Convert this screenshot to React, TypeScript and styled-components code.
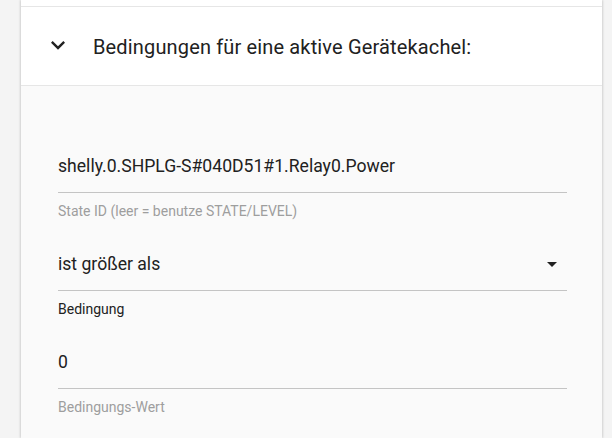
import React from "react";
import styled, { createGlobalStyle } from "styled-components";

const Global = createGlobalStyle`
  html, body { margin: 0; padding: 0; }
  body {
    background: #f4f4f4;
    font-family: Roboto, "Liberation Sans", sans-serif;
    width: 612px;
    height: 438px;
    overflow: hidden;
  }
`;

const Page = styled.div`
  display: flex;
  padding: 0 10px 0 21px;
  height: 438px;
  box-sizing: border-box;
`;

const Card = styled.div`
  flex: 1;
  display: flex;
  flex-direction: column;
  background: #fafafa;
  box-shadow: -1px 0 2px rgba(0,0,0,0.14), 1px 0 2px rgba(0,0,0,0.14);
`;

const PrevPanel = styled.div`
  height: 6px;
  background: #fff;
  border-bottom: 1px solid #e6e6e6;
`;

const Header = styled.div`
  height: 78px;
  background: #fff;
  border-bottom: 1px solid #e6e6e6;
  display: flex;
  align-items: center;
  padding-left: 23px;
`;

const Chevron = styled.svg`
  width: 28px;
  height: 28px;
  margin-right: 21px;
  margin-top: -2px;
`;

const Title = styled.div`
  font-size: 20px;
  letter-spacing: 0.15px;
  color: #212121;
  margin-top: 2px;
`;

const Content = styled.div`
  padding: 57px 35px 0 37px;
  display: flex;
  flex-direction: column;
`;

const Field = styled.div`
  display: flex;
  flex-direction: column;
  margin-bottom: 22px;
`;

const InputRow = styled.div`
  display: flex;
  align-items: center;
  justify-content: space-between;
  box-sizing: border-box;
  height: 50px;
  padding-bottom: 4px;
  border-bottom: 1px solid #c4c4c4;
  font-size: 17.6px;
  color: #212121;
`;

const Helper = styled.div<{ $dark?: boolean }>`
  margin-top: 10px;
  font-size: 14px;
  line-height: 16px;
  color: ${(p) => (p.$dark ? "#212121" : "#9e9e9e")};
`;

const Caret = styled.svg`
  width: 24px;
  height: 24px;
  margin-right: 3px;
`;

export default function App() {
  return (
    <>
      <Global />
      <Page>
        <Card>
          <PrevPanel />
          <Header>
            <Chevron viewBox="0 0 24 24">
              <path d="M7.41 8.59 12 13.17l4.59-4.58L18 10l-6 6-6-6z" fill="#212121" />
            </Chevron>
            <Title>Bedingungen für eine aktive Gerätekachel:</Title>
          </Header>
          <Content>
            <Field>
              <InputRow>shelly.0.SHPLG-S#040D51#1.Relay0.Power</InputRow>
              <Helper>State ID (leer = benutze STATE/LEVEL)</Helper>
            </Field>
            <Field>
              <InputRow>
                ist größer als
                <Caret viewBox="0 0 24 24">
                  <path d="M7 10l5 5 5-5z" fill="#212121" />
                </Caret>
              </InputRow>
              <Helper $dark>Bedingung</Helper>
            </Field>
            <Field>
              <InputRow>0</InputRow>
              <Helper>Bedingungs-Wert</Helper>
            </Field>
          </Content>
        </Card>
      </Page>
    </>
  );
}
